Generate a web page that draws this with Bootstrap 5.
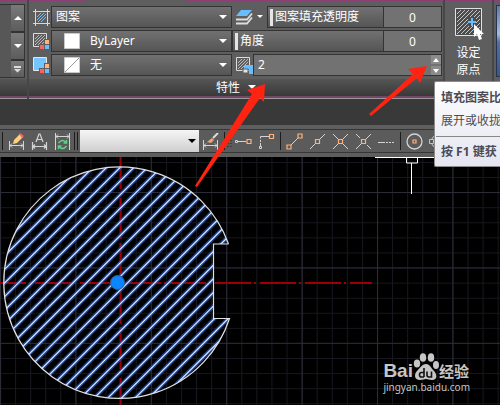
<!DOCTYPE html>
<html lang="zh-CN">
<head>
<meta charset="utf-8">
<meta name="viewport" content="width=device-width, initial-scale=1">
<title>图案填充编辑器</title>
<link href="https://cdn.jsdelivr.net/npm/bootstrap@5.3.0/dist/css/bootstrap.min.css" rel="stylesheet">
<style>
body{font-family:"Noto Sans","Noto Sans CJK SC",sans-serif;font-size:12px;line-height:18px;background:#000;color:#fff}
button,select,input{font:inherit;color:inherit}
button{background:none;border:0;padding:0}
svg{display:block;flex:none}
.ribbon{background:linear-gradient(90deg,#8c3f76 85px,#5e5e5e 85px 185px,#8c3f76 185px) top/100% 1px no-repeat #5e5e5e}
.gallery{width:27px;padding-top:4px}
.gallery-box{height:74px;border:1px solid #333;border-left:0;background:#575757;margin-right:2px}
.step-col{width:13px;gap:2px;background:#333}
.step-col button{flex:5 1 0;background:linear-gradient(#7a7a7a,#5c5c5c)}
.step-col button:last-child{flex:3 1 0}
.split{border-left:2px solid #474747}
.main-panel{min-width:0}
.fields{padding:6px 1px 3px 4px;gap:2px}
.field-row{height:22px}
.pick{width:181px;margin-left:1px;flex:none}
.cell{height:22px;border:1px solid #333;background:linear-gradient(#717171,#555)}
.cell select,.cell input{appearance:none;background:transparent;border:0;outline:0;padding:0;min-width:0}
.swatch-off{margin-left:12px;margin-right:10px}
.knob{width:3px;height:17px;background:#e4e4e4;margin-left:2px;margin-right:2px}
.cell .amount{width:58px;flex:none;text-align:center;height:20px;border-left:1px solid #333;background:#727272}
.cell.solid{background:#727272;min-width:0}
.spin{width:10px}
.spin button{height:9px;background:#8b8b8b}
.panel-foot{height:17px;background:linear-gradient(#555,#393939)}
.edge{height:3px;background:#744666;border-bottom:1px solid #999}
.origin{width:49px;padding-top:8px;line-height:17px}
.next-panel{width:8px;padding:5px 0 0 2px}
.next-panel button{width:4px;height:72px;border:1px solid #26344f;border-right:0;background:linear-gradient(#6079a8,#a8bbd8 28px,#526fa8 36px,#3c5686)}
.blank-band{height:26px;background:#393939}
.tools{height:32px;background:#5e5e5e;padding:4px 0}
.tools-in{height:24px;border-top:1px solid #363636;border-bottom:1px solid #363636;background:#5b5b5b}
.tool{width:23px;height:22px;flex:none;display:flex;align-items:center;justify-content:center}
.bar{width:1px;height:18px;background:#1c1c1c;flex:none;margin:0 2px}
.bar-pair{width:4px;height:18px;border:solid #1c1c1c;border-width:0 1px;flex:none;margin-right:2px}
.style-pick{width:119px;height:22px;flex:none;background:linear-gradient(#f5f5f5,#cfcfcf)}
.style-pick select{appearance:none;border:0;background:transparent;width:100%;height:22px}
.style-pick svg{right:3px;top:9px;pointer-events:none}
.tip{width:66px;top:81px;right:0;color:#4b4b55;background:linear-gradient(#fff,#e4e5f0);border:1px solid #8b8b8b;border-right:0;border-radius:2px 0 0 2px;white-space:nowrap;overflow:hidden;padding:7px 0 5px 6px}
.tip-title{font-weight:600;margin-bottom:5px}
.tip hr{margin:6px 0 6px -5px;color:#888;opacity:1}
.brand{right:30px;bottom:10px;color:#c6c6c6;pointer-events:none}
.brand-row{height:27px;line-height:18px}
.brand-latin{font:700 19px/18px "Liberation Sans",sans-serif}
.brand-cn{font-size:15px;font-weight:700}
.brand-url{font-size:10px;line-height:15px}
.arrows{top:0;left:0;pointer-events:none}
</style>
<script src="https://cdn.jsdelivr.net/npm/bootstrap@5.3.0/dist/js/bootstrap.bundle.min.js"></script>
</head>
<body class="vh-100 overflow-hidden d-flex flex-column position-relative">
<header class="ribbon d-flex flex-shrink-0">
  <div class="gallery flex-shrink-0 d-flex flex-column">
    <div class="gallery-box d-flex justify-content-end">
      <div class="step-col d-flex flex-column">
        <button aria-label="上一行" class="d-flex align-items-center justify-content-center"><svg width="8" height="4"><path d="M0 4L4 0 8 4z" fill="#fff"/></svg></button>
        <button aria-label="下一行" class="d-flex align-items-center justify-content-center"><svg width="8" height="4"><path d="M0 0h8L4 4z" fill="#fff"/></svg></button>
        <button aria-label="展开" class="d-flex align-items-center justify-content-center"><svg width="7" height="7"><path d="M0 0h7v2H0zM0 3h7L3.500 6.500z" fill="#ddd"/></svg></button>
      </div>
    </div>
    <div class="panel-foot mt-auto"></div>
    <div class="edge"></div>
  </div>
  <section class="split main-panel flex-fill d-flex flex-column">
    <div class="fields d-flex flex-column">
      <div class="field-row d-flex align-items-center">
        <svg width="17" height="17" viewBox="0 0 17 17"><g stroke="#d8d8d8" fill="none"><path d="M2.500 0v17M14.500 0v17M0 2.500h17M0 14.500h17"/></g><path d="M4 8l4-4M4 11l7-7M5 13l8-8M8 13l5-5" stroke="#6fc0ff"/></svg>
        <div class="pick cell d-flex align-items-center"><select aria-label="图案类型" class="flex-fill ms-1"><option>图案</option></select><svg class="me-1" width="8" height="5"><path d="M0 0h8L4 4z" fill="#fff"/></svg></div>
        <svg class="ms-1" width="17" height="17" viewBox="0 0 17 17"><path d="M5 1h11l-5 6H0z" fill="#68bdff"/><path d="M0 10.500h11l5-6M0 14.500h11l5-6" fill="none" stroke="#ddd" stroke-width="1.800"/></svg>
        <svg class="ms-1 me-1" width="6" height="4"><path d="M0 0h6L3 3z" fill="#fff"/></svg>
        <div class="cell flex-fill d-flex align-items-center overflow-hidden"><span class="knob"></span><label for="opacity" class="flex-fill text-nowrap">图案填充透明度</label><input id="opacity" class="amount" value="0"></div>
      </div>
      <div class="field-row d-flex align-items-center">
        <svg width="17" height="17" viewBox="0 0 17 17"><path d="M.5 .5h13v13H.500z" fill="none" stroke="#ddd"/><path d="M2 6l4-4M2 9l7-7M2 12l10-10M5 12l7-7M8 12l4-4" stroke="#bbb"/><path d="M11 6h6v11h-6zM6 11h5v6H6z" fill="#5e5e5e"/><path d="M12 7h4v4h-4z" fill="#ffb37c"/><path d="M7 12h4v4H7z" fill="#ff6262"/><path d="M12 12h4v4h-4z" fill="#68bdff"/></svg>
        <div class="pick cell d-flex align-items-center"><svg class="swatch-off" width="16" height="16"><path d="M.5 .5h15v15H.500z" fill="#fff" stroke="#c9c9c9"/></svg><select aria-label="图案颜色" class="flex-fill"><option>ByLayer</option></select><svg class="me-1" width="8" height="5"><path d="M0 0h8L4 4z" fill="#fff"/></svg></div>
        <div class="cell flex-fill d-flex align-items-center overflow-hidden"><span class="knob"></span><label for="angle" class="flex-fill text-nowrap">角度</label><input id="angle" class="amount" value="0"></div>
      </div>
      <div class="field-row d-flex align-items-center">
        <svg width="17" height="17" viewBox="0 0 17 17"><path d="M.5 .5h13v13H.500z" fill="#74c4ff" stroke="#e6e6e6"/><path d="M11 6h6v11h-6z" fill="#5e5e5e"/><path d="M12 7h4v4h-4z" fill="#ffb37c"/><path d="M6 11h5v6H6z" fill="#5e5e5e"/><path d="M7 12h4v4H7z" fill="#ff6262"/><path d="M12 12h4v4h-4z" fill="#68bdff"/></svg>
        <div class="pick cell d-flex align-items-center"><svg class="swatch-off" width="16" height="16"><path d="M.5 .5h15v15H.500z" fill="#fff" stroke="#c9c9c9"/><path d="M1 15L15 1" stroke="#999"/></svg><select aria-label="背景色" class="flex-fill"><option>无</option></select><svg class="me-1" width="8" height="5"><path d="M0 0h8L4 4z" fill="#fff"/></svg></div>
        <svg class="ms-1" width="17" height="17" viewBox="0 0 17 17"><path d="M.5 .5h13v13H.500z" fill="none" stroke="#ddd"/><path d="M2 6l4-4M2 9l7-7M2 12l10-10M5 12l7-7" stroke="#bbb"/><path d="M8 8h9v9h-4v-5H8z" fill="#68bdff"/><path d="M7 12h5v4H7z" fill="#e2e2e2" stroke="#5e5e5e"/></svg>
        <div class="cell solid flex-fill d-flex align-items-center"><input aria-label="填充图案比例" class="flex-fill ms-1" value="2"><div class="spin flex-shrink-0 d-flex flex-column justify-content-between h-100"><button aria-label="增大" class="d-flex align-items-center justify-content-center"><svg width="6" height="4"><path d="M0 4L3 0 6 4z" fill="#fff"/></svg></button><button aria-label="减小" class="d-flex align-items-center justify-content-center"><svg width="6" height="4"><path d="M0 0h6L3 4z" fill="#fff"/></svg></button></div></div>
      </div>
    </div>
    <button class="panel-foot mt-auto d-flex align-items-center justify-content-center gap-2"><span>特性</span><svg width="8" height="5"><path d="M0 0h8L4 4z" fill="#fff"/></svg></button>
    <div class="edge"></div>
  </section>
  <section class="split origin flex-shrink-0 d-flex flex-column">
    <button class="d-flex flex-column align-items-center"><svg width="30" height="32" viewBox="0 0 30 32"><path d="M1.500 .5h26v27h-26z" fill="#4c4c4c" stroke="#e2e2e2"/><path d="M3 6l4-4M3 10l8-8M3 14L15 2M3 18L19 2M3 22L23 2M3 26L26 3M7 26L26 7M11 26l15-15M15 26l11-11M19 26l7-7" stroke="#c4c4c4"/><path d="M14 9h8v9h-8z" fill="#4c4c4c"/><path d="M18 10v8M14 14h8" stroke="#68bdff" stroke-width="2"/><path d="M20 16v13l3-3 2 6 3-1-2-5h4z" fill="#fff"/></svg><span class="pt-1">设定</span><span>原点</span></button>
    <div class="edge mt-auto"></div>
  </section>
  <div class="split next-panel flex-shrink-0"><button aria-label="关联"></button></div>
</header>
<div class="blank-band flex-shrink-0"></div>
<nav class="tools flex-shrink-0" aria-label="标注与捕捉">
  <div class="tools-in d-flex align-items-center overflow-hidden">
    <span class="bar"></span>
    <button class="tool" aria-label="编辑标注"><svg width="17" height="17" viewBox="0 0 17 17"><path d="M1.500 8v9M15.500 8v9M2 12.500h13M4 10.500l-2 2 2 2M13 10.500l2 2-2 2" fill="none" stroke="#d4d4d4"/><path d="M6 7l6-6 3 3-6 6-4 1z" fill="#ffd080"/><path d="M12 0l4 3-2 2-3-4z" fill="#ff6060"/></svg></button>
    <button class="tool" aria-label="标注文字"><svg width="17" height="17" viewBox="0 0 17 17"><path d="M1.500 9v8M15.500 9v8M2 13.500h13M4 11.500l-2 2 2 2M13 11.500l2 2-2 2M5 9l3-8 1 0 3 8M6 6.500h5" fill="none" stroke="#d4d4d4" stroke-width="1.200"/></svg></button>
    <button class="tool" aria-label="标注更新"><svg width="17" height="17" viewBox="0 0 17 17"><path d="M1.500 0v17M15.500 0v17M2 3.500h13M4 1.500l-2 2 2 2M13 1.500l2 2-2 2" fill="none" stroke="#d4d4d4"/><path d="M4.500 10Q8.500 5 12.500 10M12.500 7v3h-3M12.500 13Q8.500 18 4.500 13M4.500 16v-3h3" fill="none" stroke="#5fd08a" stroke-width="1.500"/></svg></button>
    <span class="bar-pair"></span>
    <div class="style-pick position-relative"><select aria-label="标注样式"><option></option></select><svg class="position-absolute" width="8" height="5"><path d="M0 0h8L4 4z" fill="#000"/></svg></div>
    <button class="tool" aria-label="标注样式管理"><svg width="17" height="17" viewBox="0 0 17 17"><path d="M1.500 7v10M15.500 7v10M2 12.500h13M4 10.500l-2 2 2 2M13 10.500l2 2-2 2" fill="none" stroke="#d4d4d4"/><path d="M5 9l5-4 2 2-3 3z" fill="#e5a96d"/><path d="M11 5l5-5" stroke="#ddd" stroke-width="2"/></svg></button>
    <span class="bar"></span>
    <svg width="5" height="15"><path d="M1 0v15M4 0v15" stroke="#222" stroke-dasharray="1 2"/></svg>
    <button class="tool" aria-label="临时追踪点"><svg width="17" height="17" viewBox="0 0 17 17"><path d="M.5 7.500h2v2h-2zM3 8.500h8" fill="none" stroke="#d4d4d4"/><path d="M12 6.500h4v4h-4z" fill="none" stroke="#ffb27a" stroke-width="1.200"/></svg></button>
    <button class="tool" aria-label="捕捉自"><svg width="17" height="17" viewBox="0 0 17 17"><path d="M11 3.500H2.500v2M2.500 7v2M2.500 10v3M1.500 13.500h2v2h-2z" fill="none" stroke="#d4d4d4"/><path d="M11.500 1.500h4v4h-4z" fill="none" stroke="#ffb27a" stroke-width="1.200"/></svg></button>
    <span class="bar"></span>
    <button class="tool" aria-label="端点"><svg width="17" height="17" viewBox="0 0 17 17"><path d="M5 12l7-7" stroke="#d4d4d4"/><path d="M1 12h4v4H1zM12 1h4v4h-4z" fill="none" stroke="#ffb27a" stroke-width="1.200"/></svg></button>
    <button class="tool" aria-label="中点"><svg width="17" height="17" viewBox="0 0 17 17"><path d="M1 16l5-5M11 6l5-5" stroke="#d4d4d4"/><path d="M6.500 6.500h4v4h-4z" fill="none" stroke="#ffb27a" stroke-width="1.200"/></svg></button>
    <button class="tool" aria-label="交点"><svg width="17" height="17" viewBox="0 0 17 17"><path d="M1 16L16 1M1 1l15 15" stroke="#d4d4d4"/><path d="M6.500 6.500h4v4h-4z" fill="#5b5b5b" stroke="#ffb27a" stroke-width="1.200"/></svg></button>
    <button class="tool" aria-label="外观交点"><svg width="17" height="17" viewBox="0 0 17 17"><path d="M1 16L16 1M1 1l4 4M12 12l4 4" stroke="#d4d4d4"/><path d="M6.500 6.500h4v4h-4z" fill="#5b5b5b" stroke="#ffb27a" stroke-width="1.200"/></svg></button>
    <button class="tool" aria-label="延长线"><svg width="17" height="17"><path d="M0 9.500h7M8 9.500h2M11 9.500h2M14 9.500h2" stroke="#d4d4d4"/></svg></button>
    <span class="bar"></span>
    <button class="tool" aria-label="圆心"><svg width="17" height="17" viewBox="0 0 17 17"><circle cx="8.500" cy="8.500" r="7.500" fill="none" stroke="#d4d4d4" stroke-width="1.300"/><path d="M7 7h3v3H7z" fill="none" stroke="#ffb27a" stroke-width="1.200"/></svg></button>
    <button class="tool" aria-label="象限点"><svg width="17" height="17" viewBox="0 0 17 17"><circle cx="9.500" cy="8.500" r="7" fill="none" stroke="#d4d4d4"/><path d="M.5 6.500h4v4h-4z" fill="#5b5b5b" stroke="#ffb27a"/></svg></button>
  </div>
</nav>
<main class="flex-fill position-relative overflow-hidden">
  <svg class="w-100 h-100" role="img" aria-label="填充图形">
    <defs>
      <pattern id="minor" width="15.080" height="15.080" patternUnits="userSpaceOnUse" y="5"><path d="M0 .5h16M.5 0v16" stroke="#17181f"/></pattern>
      <pattern id="major" width="75.400" height="75.400" patternUnits="userSpaceOnUse" y="35"><path d="M0 .5h76M.5 0v76" stroke="#2a2c38"/></pattern>
      <clipPath id="part"><path d="M228.500 87H213.500V161.500H229.500A115.700 115.700 0 1 1 228.500 87z"/></clipPath>
      <path id="hatch" d="M89.700 0l-300 300m313.640-300l-300 300m313.640-300l-300 300m313.640-300l-300 300m313.640-300l-300 300m313.640-300l-300 300m313.640-300l-300 300m313.640-300l-300 300m313.640-300l-300 300m313.640-300l-300 300m313.640-300l-300 300m313.640-300l-300 300m313.640-300l-300 300m313.640-300l-300 300m313.640-300l-300 300m313.640-300l-300 300m313.640-300l-300 300m313.640-300l-300 300m313.640-300l-300 300m313.640-300l-300 300m313.640-300l-300 300m313.640-300l-300 300m313.640-300l-300 300m313.640-300l-300 300"/>
    </defs>
    <rect width="100%" height="100%" fill="url(#minor)"/>
    <rect width="100%" height="100%" fill="url(#major)"/>
    <path d="M0 126H372" stroke="#9c0006" stroke-width="2" stroke-dasharray="36 3 2 4" stroke-dashoffset="10"/>
    <path d="M120.500 0V248" stroke="#9c0006" stroke-width="2" stroke-dasharray="36 3 2 4" stroke-dashoffset="4"/>
    <g clip-path="url(#part)" fill="none">
      <use href="#hatch" stroke="#2450b0" stroke-opacity=".8" stroke-width="4"/>
      <use href="#hatch" stroke="#dfe9ff" stroke-width="1.200"/>
    </g>
    <path d="M228.500 87H213.500V161.500H229.500A115.700 115.700 0 1 1 228.500 87" fill="none" stroke="#e0e0e0" stroke-width="1.200"/>
    <circle cx="117.500" cy="125.500" r="7" fill="#0a84ff" stroke="#345c86"/>
    <path d="M375 .5h62M406.500 0v6h11V0M411.500 6v31" fill="none" stroke="#fff"/>
  </svg>
  <div class="brand position-absolute">
    <div class="brand-row d-flex align-items-end">
      <span class="brand-latin">Bai</span>
      <svg width="26" height="27" viewBox="0 0 26 27"><g fill="#c6c6c6"><ellipse cx="4" cy="10.500" rx="3.200" ry="4"/><ellipse cx="10" cy="4.500" rx="3.200" ry="4.300"/><ellipse cx="18" cy="4.500" rx="3.200" ry="4.300"/><ellipse cx="23" cy="12" rx="3" ry="4"/><path d="M13 11c4 0 5 4 8 7s4 9-2 9c-3 0-4-1-6-1s-3 1-6 1c-6 0-6-6-3-9s5-7 9-7z"/></g><path d="M11 15v9M11 19.500H8.500q-2 0-2 2.200 0 2.300 2 2.300H11M14 18.500V22q0 2 2 2h2.500v-5.500" fill="none" stroke="#111" stroke-width="1.600"/></svg>
      <span class="brand-cn">经验</span>
    </div>
    <div class="brand-url">jingyan.baidu.com</div>
  </div>
</main>
<svg class="arrows position-absolute" width="440" height="190" aria-hidden="true"><path d="M265 84L247 90 252 94 195 186 197 187 260 98 264 102zM427 66L408 69 413 74 369 114 371 116 417 78 420 83z" fill="#ff2312"/></svg>
<aside class="tip position-absolute" role="tooltip">
  <div class="tip-title">填充图案比</div>
  <div>展开或收拢</div>
  <hr>
  <div class="fw-bold">按 F1 键获</div>
</aside>
</body>
</html>
